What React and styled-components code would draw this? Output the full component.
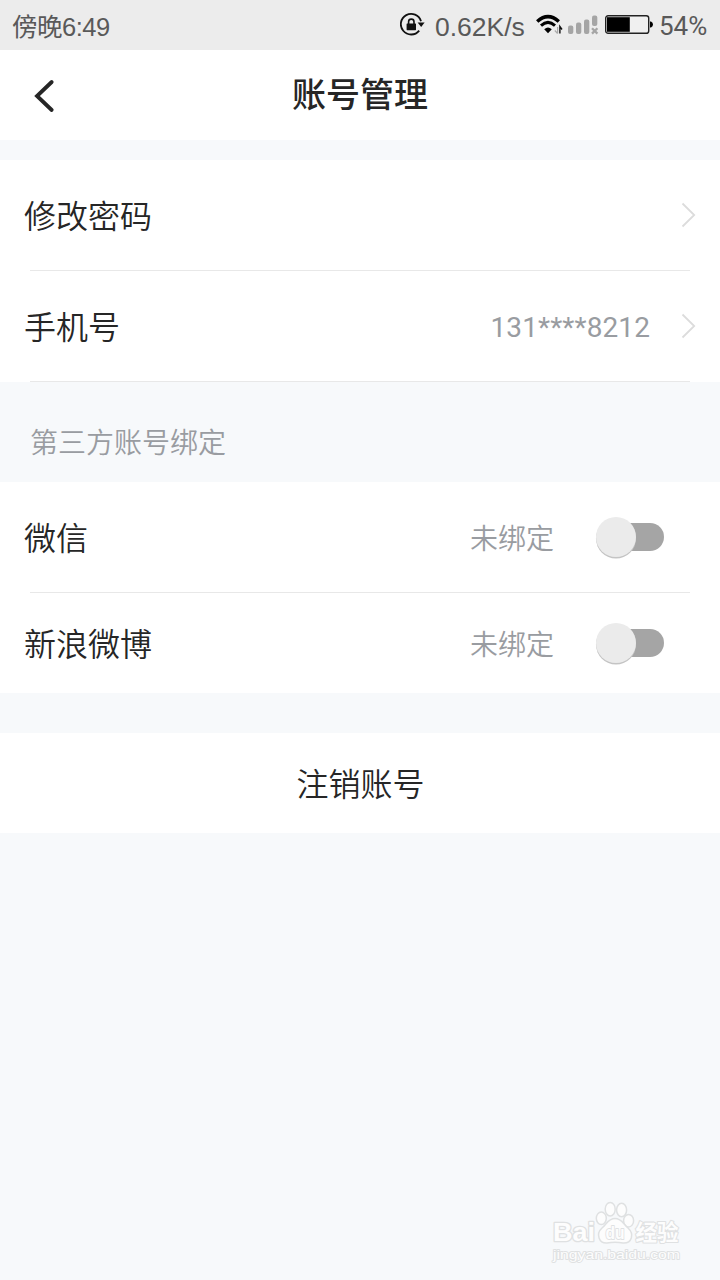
import React, {useState} from "react";
import styled, {createGlobalStyle} from "styled-components";

const GlobalStyle = createGlobalStyle`
  body {
    margin: 0;
    background: #f7f9fb;
    font-family: Roboto, "Noto Sans CJK SC", sans-serif;
  }
`

const Screen = styled.div`
  position: relative;
  width: 720px;
  height: 1280px;
  overflow: hidden;
  background: #f7f9fb;
  color: #262626;
`

const StatusBar = styled.div`
  box-sizing: border-box;
  display: flex;
  align-items: center;
  height: 50px;
  padding: 0 13px 0 12px;
  background: #ececec;
  color: #595959;
  font-size: 26px;
  line-height: 48px;
  white-space: nowrap;
  svg {
    display: block;
    flex: none;
  }
`

const Clock = styled.div`
  flex: 1;
  padding-top: 3px;
  font-family: "Liberation Sans", "Noto Sans CJK SC", sans-serif;
  font-size: 25.5px;
  letter-spacing: -0.5px;
`

const Speed = styled.div`
  width: 92px;
  margin: 3px 9px 0 9px;
  font-family: "Liberation Sans", sans-serif;
  font-size: 26.5px;
`

const Percent = styled.div`
  width: 48px;
  margin-left: 6px;
  padding-top: 2px;
  font-family: Roboto, sans-serif;
  font-size: 26px;
`

const Header = styled.div`
  display: grid;
  grid-template-columns: 80px 1fr 80px;
  align-items: center;
  height: 90px;
  margin-bottom: 20px;
  background: #fff;
`

const BackButton = styled.button`
  display: flex;
  padding: 2px 0 0 33px;
  border: 0;
  background: none;
`

const Title = styled.div`
  text-align: center;
  font-size: 34px;
  font-weight: 500;
  line-height: 50px;
`

const Group = styled.div`
  background: #fff;
`

const Row = styled.div`
  display: flex;
  align-items: center;
  height: ${(props) => props.$height || 110}px;
  padding: 0 24px;
`

const Line = styled.div`
  height: 1px;
  margin: 0 30px;
  background: #e8e8e8;
`

const Label = styled.div`
  flex: 1;
  padding-top: 4px;
  font-size: 32px;
  font-weight: 350;
  line-height: 48px;
`

const Value = styled.div`
  margin-right: 42px;
  padding-top: 6px;
  color: #999ca1;
  font-size: 28px;
  font-weight: 350;
  line-height: 42px;
`

const Phone = styled(Value)`
  margin-right: 30px;
  padding-top: 4px;
  font-weight: 400;
  letter-spacing: 0.1px;
`

const SectionTitle = styled.div`
  box-sizing: border-box;
  height: 100px;
  padding: 12px 30px 0;
  color: #999ca1;
  font-size: 28px;
  font-weight: 350;
  line-height: 100px;
`

const Toggle = styled.button`
  position: relative;
  width: 68px;
  height: 42px;
  margin-right: 32px;
  padding: 0;
  border: 0;
  background: none;
  &::before {
    content: "";
    position: absolute;
    left: 6px;
    right: 0;
    top: 7px;
    height: 28px;
    border-radius: 14px;
    background: #a5a5a5;
  }
`

const Knob = styled.span`
  position: absolute;
  left: ${(props) => (props.$on ? 28 : 0)}px;
  top: 1px;
  width: 40px;
  height: 40px;
  border-radius: 50%;
  background: #ebebeb;
  box-shadow: 0 1.5px 0.5px #c4c4c4;
`

const CancelButton = styled.button`
  display: block;
  width: 100%;
  height: 100px;
  margin-top: 40px;
  padding: 4px 0 0 1px;
  border: 0;
  background: #fff;
  color: #262626;
  font-family: inherit;
  font-size: 32px;
  font-weight: 350;
  line-height: 96px;
`

const Watermark = styled.svg`
  position: absolute;
  right: 30px;
  bottom: 10px;
`

const LockIcon = () => (
  <svg width="26" height="26" viewBox="1 0 26 26" fill="none">
    <path d="M20.2 18.6A10.3 10.3 0 1 1 22 9.2" stroke="#111" strokeWidth="1.8"/>
    <path d="M18.6 10.6H25.6L22.2 15Z" fill="#111"/>
    <rect x="7.6" y="11.4" width="9.4" height="6.8" rx="0.6" fill="#111"/>
    <path d="M9.6 12V9.8a2.7 2.7 0 0 1 5.4 0V12" stroke="#111" strokeWidth="1.6"/>
  </svg>
)

const WifiIcon = () => (
  <svg width="27" height="22" viewBox="0 0 27 22" fill="none">
    <path d="M1.2 7.6Q12 -2.3 22.8 7.6" stroke="#000" strokeWidth="3.4"/>
    <path d="M5 11.6Q12 5.2 19 11.6" stroke="#000" strokeWidth="3"/>
    <path d="M8.2 15.2Q12 12 15.8 15.2L12 19.2Z" fill="#000"/>
    <path d="M21.6 19.5V13M21.6 19.5L18.8 16.5" stroke="#aaa" strokeWidth="1.2"/>
    <path d="M23.9 19.5V12.5L26 15.5" stroke="#111" strokeWidth="1.4"/>
  </svg>
)

const SignalIcon = () => (
  <svg width="42" height="22" viewBox="-5 0 42 22">
    <g fill="#a5a5a5">
      <rect x="0" y="11.5" width="5.3" height="8.5" rx="2"/>
      <rect x="8" y="8.5" width="5.3" height="11.5" rx="2"/>
      <rect x="16" y="5.5" width="5.3" height="14.5" rx="2"/>
      <rect x="24" y="1.5" width="5.3" height="10.5" rx="2"/>
    </g>
    <path d="M24 14.2l5.4 5.4M29.4 14.2L24 19.6" stroke="#a5a5a5" strokeWidth="2.3"/>
  </svg>
)

const BatteryIcon = () => (
  <svg width="48" height="20" viewBox="0 0 48 20">
    <rect x="0.7" y="0.7" width="43" height="17.6" rx="2.4" fill="#f0f0f0" stroke="#222" strokeWidth="1.4"/>
    <rect x="2" y="2.2" width="22.8" height="14.6" fill="#000"/>
    <path d="M45 6.5h1q2 .8 2 3T46 12.5h-1Z" fill="#000"/>
  </svg>
)

const Arrow = () => (
  <svg width="16" height="26" viewBox="0 0 16 26" fill="none">
    <path d="M2.5 1.5L14.2 13L2.5 24.5" stroke="#dcdcdc" strokeWidth="1.8"/>
  </svg>
)

const BaiduMark = () => (
  <Watermark width="140" height="72" viewBox="0 0 140 72">
    <g fill="#fdfdfd" stroke="#dfe1e2" strokeWidth="1.5" strokeLinejoin="round">
      <ellipse cx="51.3" cy="20.3" rx="5" ry="6.3"/>
      <ellipse cx="60.2" cy="11.2" rx="5" ry="6.8"/>
      <ellipse cx="71.6" cy="12" rx="5" ry="6.8"/>
      <ellipse cx="78.6" cy="22.7" rx="5" ry="6.3"/>
      <path d="M65 20.5C58 20.5 57 26 52 30C45.5 36 49 45.5 57 45Q65 43.5 73 45C82 45.5 84.5 36 78 30C73 26 72 20.5 65 20.5Z"/>
      <g fontFamily="Liberation Sans" fontWeight="700" paintOrder="stroke" strokeWidth="2.6">
        <text x="3" y="43" fontSize="26.5" textLength="42" lengthAdjust="spacingAndGlyphs">Bai</text>
        <text x="55.5" y="41" fontSize="18.5" textLength="19" lengthAdjust="spacingAndGlyphs" strokeWidth="1.8">du</text>
        <text x="85.5" y="42" fontSize="22" textLength="43" lengthAdjust="spacingAndGlyphs" fontFamily="Noto Sans CJK SC" strokeWidth="2.2">经验</text>
        <text x="3" y="60.5" fontSize="13.5" textLength="127" lengthAdjust="spacingAndGlyphs" fontWeight="400" strokeWidth="1.8">jingyan.baidu.com</text>
      </g>
    </g>
  </Watermark>
)

const BindRow = ({name, height}) => {
  const [isOn, setIsOn] = useState(false);

  return (
    <Row $height={height}>
      <Label>{name}</Label>
      <Value>未绑定</Value>
      <Toggle onClick={() => setIsOn(!isOn)}>
        <Knob $on={isOn}/>
      </Toggle>
    </Row>
  )
}

const App = () => {
  return (
    <>
      <GlobalStyle/>
      <Screen>
        <StatusBar>
          <Clock>傍晚6:49</Clock>
          <LockIcon/>
          <Speed>0.62K/s</Speed>
          <WifiIcon/>
          <SignalIcon/>
          <BatteryIcon/>
          <Percent>54%</Percent>
        </StatusBar>
        <Header>
          <BackButton>
            <svg width="22" height="34" viewBox="0 0 22 34" fill="none">
              <path d="M18.7 3L4 17L18.7 31" stroke="#262626" strokeWidth="3.8" strokeLinecap="round"/>
            </svg>
          </BackButton>
          <Title>账号管理</Title>
        </Header>
        <Group>
          <Row>
            <Label>修改密码</Label>
            <Arrow/>
          </Row>
          <Line/>
          <Row>
            <Label>手机号</Label>
            <Phone>131****8212</Phone>
            <Arrow/>
          </Row>
          <Line/>
        </Group>
        <SectionTitle>第三方账号绑定</SectionTitle>
        <Group>
          <BindRow name="微信"/>
          <Line/>
          <BindRow name="新浪微博" height={100}/>
        </Group>
        <CancelButton>注销账号</CancelButton>
        <BaiduMark/>
      </Screen>
    </>
  );
};

export default App;
